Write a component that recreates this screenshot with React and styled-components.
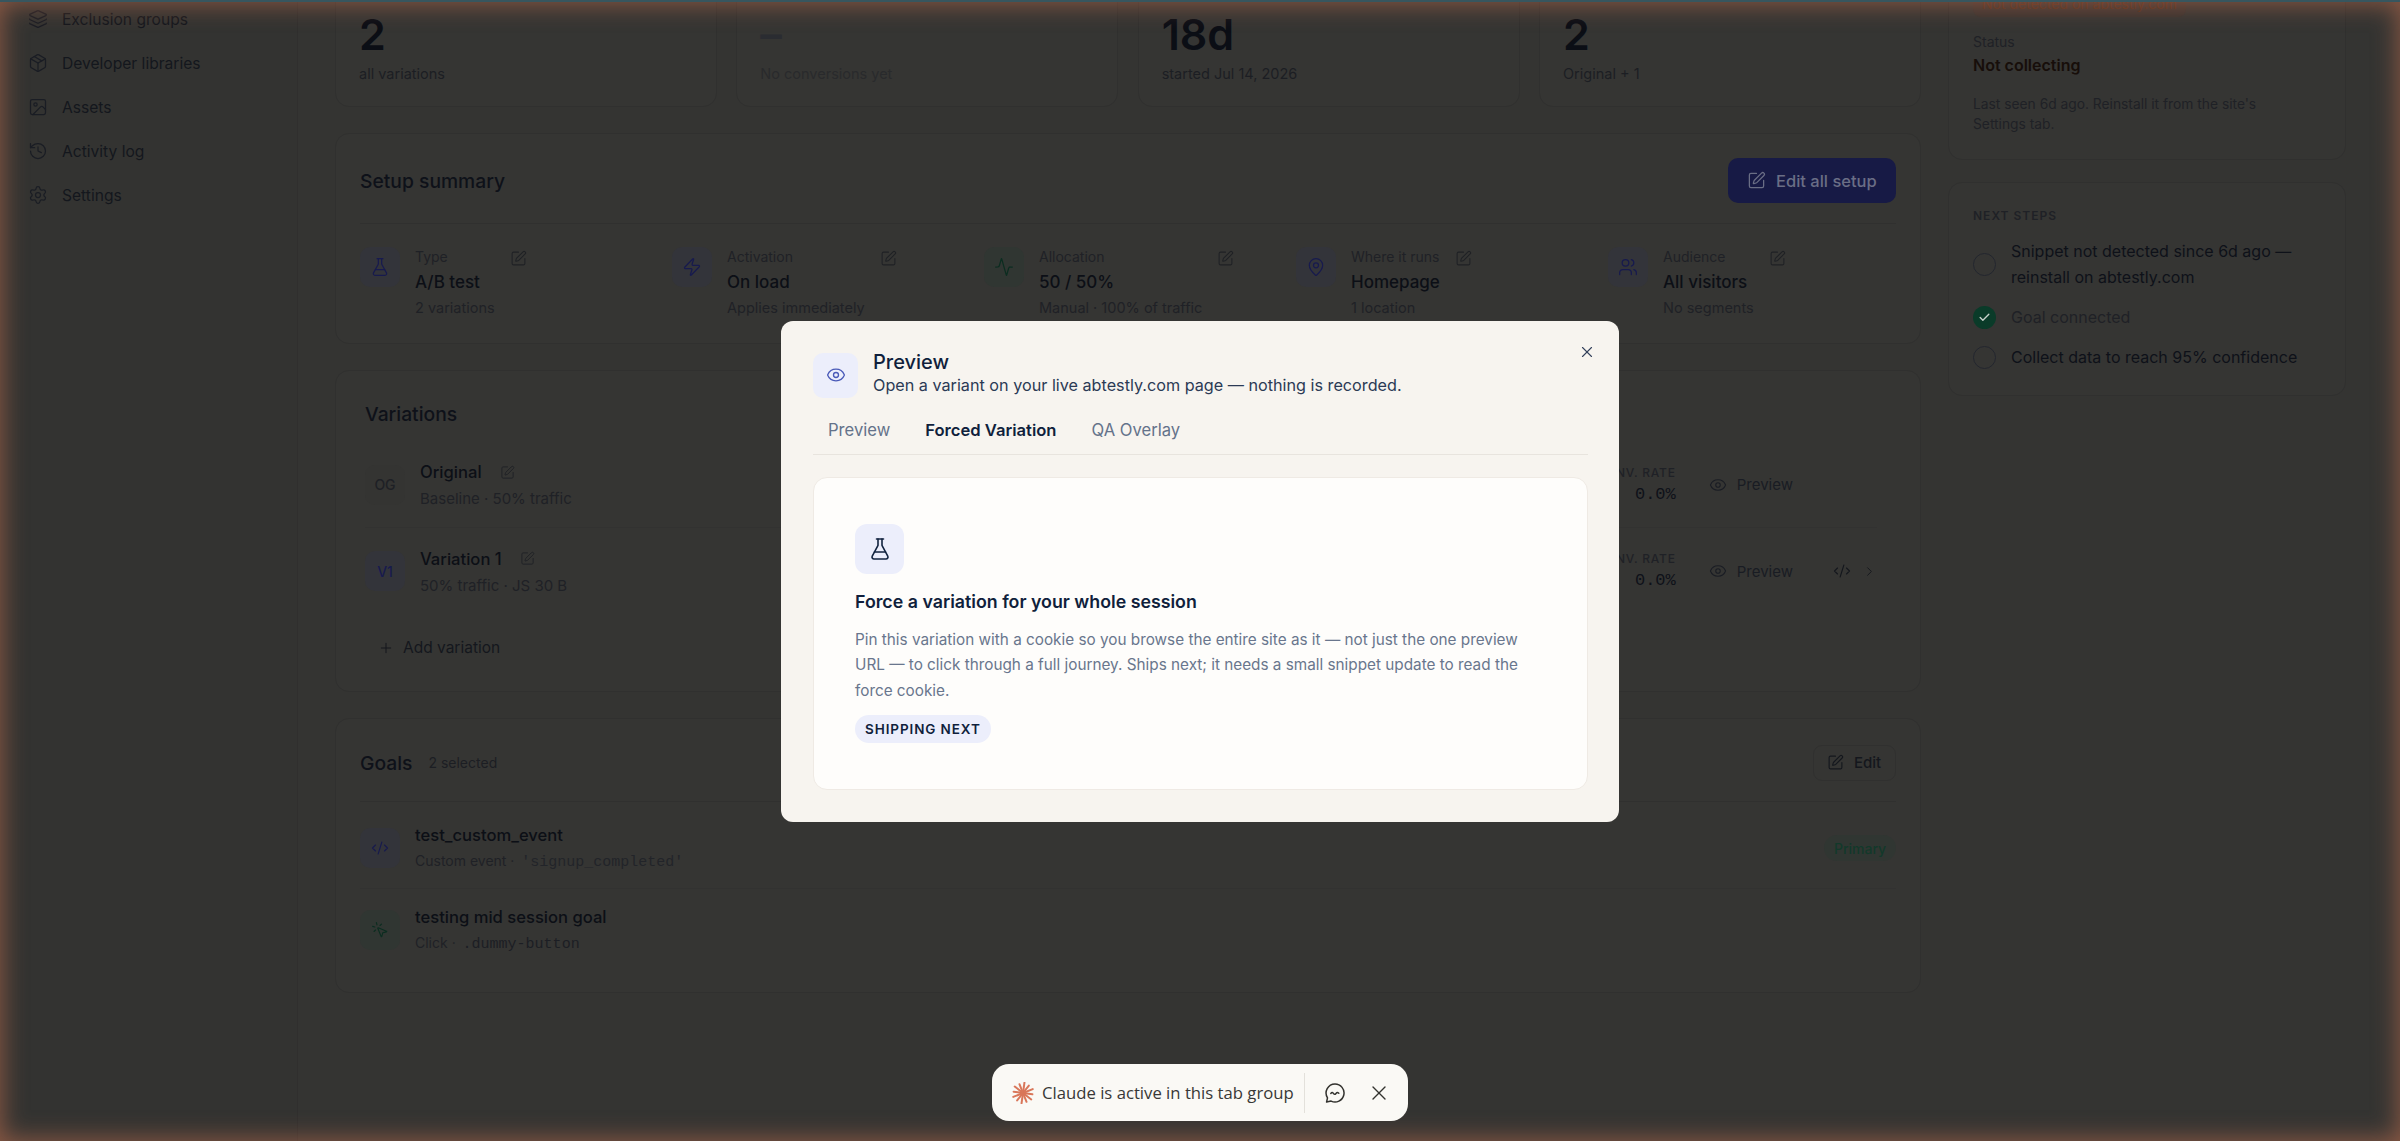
import React from "react";
import styled, { createGlobalStyle } from "styled-components";
import {
  Activity,
  Check,
  ChevronRight,
  CodeXml,
  Eye,
  FlaskConical,
  History,
  Image,
  Layers,
  MapPin,
  MousePointerClick,
  Package,
  Plus,
  Settings,
  SquarePen,
  Users,
  X,
  Zap,
} from "lucide-react";

const GlobalStyle = createGlobalStyle`
  html, body { margin: 0; height: 100%; overflow: hidden; background: #343432; }
  body { font-family: Inter, Roboto, "Liberation Sans", sans-serif; color: #0e1119; }
  * { box-sizing: border-box; }
`;

const MONO = `"Liberation Mono", "DejaVu Sans Mono", monospace`;

const Shell = styled.div`
  position: relative;
  display: flex;
  width: 2400px;
  height: 1141px;
  overflow: hidden;
  background: #343432;
`;

const Sidebar = styled.nav`
  flex: 0 0 298px;
  height: 100%;
  padding: 0 0 0 28px;
  margin-right: 37px;
  border-right: 1px solid #302f2e;
  background: #333331;
`;
const NavList = styled.div`
  display: flex;
  flex-direction: column;
  gap: 14px;
  margin-top: 4px;
`;
const NavItem = styled.div`
  display: flex;
  align-items: center;
  gap: 14px;
  height: 30px;
  font-size: 15.6px;
  color: #14171d;
  svg { color: #1a1d24; flex: none; }
`;

const Main = styled.main`
  flex: 0 0 1586px;
  min-width: 0;
  display: flex;
  flex-direction: column;
  gap: 26px;
  margin-right: 27px;
  margin-top: -40px;
`;
const Card = styled.section`
  background: #353533;
  border: 1px solid #30302f;
  border-radius: 14px;
`;
const StatGrid = styled.div`
  display: grid;
  grid-template-columns: repeat(4, 382px);
  justify-content: space-between;
`;
const StatCard = styled(Card)`
  height: 147px;
  padding: 48px 0 0 23px;
`;
const StatValue = styled.div`
  height: 50px;
  font-size: 43px;
  line-height: 50px;
  font-weight: 600;
  color: ${(p) => (p.$muted ? "#2a2c31" : "#0b0e15")};
`;
const StatLabel = styled.div`
  margin-top: 5px;
  font-size: 14.5px;
  line-height: 20px;
  color: ${(p) => (p.$muted ? "#292a2c" : "#1c1e23")};
`;

const SetupCard = styled(Card)`
  height: 211px;
  padding: 0 24px;
`;
const SetupHeader = styled.div`
  display: flex;
  align-items: center;
  justify-content: space-between;
  height: 90px;
  padding: 24px 0 20px;
  border-bottom: 1px solid #30302f;
`;
const CardTitle = styled.h2`
  margin: 0;
  font-size: 19.3px;
  line-height: 24px;
  font-weight: 500;
  color: #0e1119;
`;
const PrimaryButton = styled.div`
  display: flex;
  align-items: center;
  gap: 10px;
  width: 168px;
  height: 45px;
  padding-left: 19px;
  border-radius: 10px;
  background: #171a45;
  font-size: 16.5px;
  font-weight: 500;
  color: #6a6e85;
`;
const SetupRow = styled.div`
  display: grid;
  grid-template-columns: repeat(4, 312px) 1fr;
  padding-top: 23px;
`;
const SetupItem = styled.div`
  display: flex;
  align-items: flex-start;
`;
const IconBox = styled.div`
  flex: none;
  display: flex;
  align-items: center;
  justify-content: center;
  width: 40px;
  height: 40px;
  border-radius: 10px;
  background: ${(p) => (p.$tone === "green" ? "#303632" : p.$tone === "plain" ? "#343432" : "#33343a")};
  color: ${(p) => (p.$tone === "green" ? "#0b2d20" : p.$tone === "plain" ? "#1e2025" : "#171a4e")};
  font-size: 14px;
  font-weight: 500;
`;
const SetupText = styled.div`
  margin-left: 15px;
`;
const SetupLabel = styled.div`
  font-size: 14px;
  line-height: 20px;
  color: #1f2126;
`;
const SetupValue = styled.div`
  margin-top: 3px;
  font-size: 17px;
  line-height: 24px;
  font-weight: 500;
  color: #0c0f16;
`;
const SetupSub = styled.div`
  margin-top: 4px;
  font-size: 14.5px;
  line-height: 20px;
  color: #1f2126;
`;
const EditGlyph = styled(SquarePen)`
  flex: none;
  color: #1f2125;
  margin: ${(p) => p.$margin || "3px 0 0 15px"};
`;

const VariationsCard = styled(Card)`
  height: 322px;
  padding: 31px 43px 0 29px;
`;
const VariationRow = styled.div`
  display: flex;
  align-items: center;
  height: 86px;
  border-bottom: ${(p) => (p.$last ? "none" : "1px solid #323231")};
  margin-top: ${(p) => (p.$first ? "16px" : "0")};
`;
const RowText = styled.div`
  flex: 1;
  margin-left: 15px;
`;
const RowName = styled.div`
  display: flex;
  align-items: center;
  font-size: 16.6px;
  line-height: 24px;
  font-weight: 500;
  color: #0c0f16;
`;
const RowSub = styled.div`
  margin-top: 5px;
  font-size: 15px;
  line-height: 20px;
  color: #1f2126;
`;
const ConvRate = styled.div`
  text-align: right;
`;
const ConvLabel = styled.div`
  font-size: 12px;
  line-height: 16px;
  font-weight: 500;
  letter-spacing: 0.8px;
  color: #1f2126;
`;
const ConvValue = styled.div`
  margin-top: 4px;
  font-family: ${MONO};
  font-size: 17px;
  line-height: 20px;
  color: #0e1119;
`;
const PreviewLink = styled.div`
  display: flex;
  align-items: center;
  gap: 10px;
  margin-left: 33px;
  font-size: 15px;
  color: #191c23;
  svg { color: #1a1d24; }
`;
const RowActions = styled.div`
  display: flex;
  align-items: center;
  justify-content: space-between;
  width: 44px;
  margin-left: 40px;
  color: #14171d;
`;
const AddVariation = styled.div`
  display: flex;
  align-items: center;
  gap: 9px;
  margin: 24px 0 0 13px;
  font-size: 15.5px;
  color: #14171d;
`;

const GoalsCard = styled(Card)`
  height: 275px;
  padding: 0 24px;
`;
const GoalsHeader = styled.div`
  display: flex;
  align-items: center;
  height: 83px;
  padding: 25px 0 20px;
  border-bottom: 1px solid #30302f;
`;
const GoalsCount = styled.span`
  margin-left: 16px;
  font-size: 14px;
  color: #1c1e23;
`;
const OutlineButton = styled.div`
  display: flex;
  align-items: center;
  gap: 10px;
  width: 83px;
  height: 36px;
  margin-left: auto;
  padding-left: 13px;
  border: 1px solid #30302f;
  border-radius: 9px;
  font-size: 15px;
  font-weight: 500;
  color: #14171d;
`;
const GoalList = styled.div`
  margin-top: 6px;
`;
const GoalRow = styled.div`
  display: flex;
  align-items: center;
  height: 81px;
  border-bottom: ${(p) => (p.$last ? "none" : "1px solid #323231")};
`;
const GoalText = styled.div`
  flex: 1;
  margin-left: 15px;
`;
const GoalSub = styled.div`
  margin-top: 4px;
  font-size: 14px;
  line-height: 20px;
  color: #1f2126;
`;
const CodeText = styled.span`
  margin-left: 3px;
  font-family: ${MONO};
  font-size: 15px;
  color: ${(p) => p.$dim || "#222429"};
`;
const PrimaryPill = styled.span`
  display: flex;
  align-items: center;
  justify-content: center;
  width: 72px;
  height: 26px;
  border-radius: 13px;
  background: #303632;
  font-size: 14px;
  font-weight: 500;
  color: #12392a;
`;

const Aside = styled.aside`
  flex: 0 0 398px;
  display: flex;
  flex-direction: column;
  gap: 22px;
  margin-top: -41px;
`;
const SideCard = styled(Card)`
  padding: ${(p) => p.$padding};
`;
const AlertPill = styled.div`
  display: inline-block;
  height: 26px;
  padding: 0 9px;
  border-radius: 8px;
  background: #3a3330;
  font-size: 14px;
  line-height: 26px;
  color: #52301f;
`;
const StatusLabel = styled.div`
  margin-top: 16px;
  font-size: 14px;
  line-height: 18px;
  color: #1f2126;
`;
const StatusValue = styled.div`
  margin-top: 2px;
  font-size: 16px;
  line-height: 24px;
  font-weight: 600;
  color: #170e0a;
`;
const StatusNote = styled.div`
  margin-top: 17px;
  font-size: 13.8px;
  line-height: 20px;
  color: #1f2126;
`;
const StepsTitle = styled.div`
  font-size: 12px;
  line-height: 16px;
  font-weight: 600;
  letter-spacing: 1px;
  color: #1f2126;
`;
const StepList = styled.div`
  display: flex;
  flex-direction: column;
  gap: 14px;
  margin-top: 14px;
`;
const Step = styled.div`
  display: flex;
  align-items: center;
  gap: 15px;
  font-size: 16px;
  line-height: 26px;
  color: ${(p) => (p.$done ? "#1f2126" : "#0e1119")};
`;
const StepDot = styled.span`
  flex: none;
  display: flex;
  align-items: center;
  justify-content: center;
  width: 23px;
  height: 23px;
  border-radius: 50%;
  border: ${(p) => (p.$done ? "none" : "1.5px solid #23262e")};
  background: ${(p) => (p.$done ? "#0a3b29" : "transparent")};
  color: #c8d2cc;
`;

const ModalLayer = styled.div`
  position: absolute;
  inset: 1px 0 0 0;
  display: flex;
  align-items: center;
  justify-content: center;
`;
const Modal = styled.div`
  width: 838px;
  height: 501px;
  padding: 32px 31px 32px 32px;
  border-radius: 12px;
  background: #f7f4ef;
  position: relative;
`;
const CloseButton = styled.div`
  position: absolute;
  top: 22px;
  right: 23px;
  color: #33405a;
  line-height: 0;
`;
const ModalHeader = styled.div`
  display: flex;
  align-items: center;
  gap: 15px;
  height: 45px;
`;
const ModalHeaderText = styled.div`
  margin-top: -3px;
`;
const ModalIcon = styled.div`
  display: flex;
  align-items: center;
  justify-content: center;
  width: 45px;
  height: 45px;
  border-radius: 10px;
  background: #eceefb;
  color: #4a5ab8;
`;
const ModalTitle = styled.div`
  font-size: 20px;
  line-height: 24px;
  font-weight: 500;
  color: #101f3c;
`;
const ModalSub = styled.div`
  font-size: 16.2px;
  line-height: 23px;
  color: #2b3a55;
`;
const Tabs = styled.div`
  display: flex;
  height: 45px;
  margin-top: 12px;
  padding: 0 0 3px 15px;
  gap: 35px;
  align-items: center;
  border-bottom: 1px solid #e8e4de;
`;
const Tab = styled.div`
  font-size: 16.6px;
  font-weight: ${(p) => (p.$active ? 600 : 400)};
  color: ${(p) => (p.$active ? "#101f3c" : "#64728a")};
`;
const ModalCard = styled.div`
  height: 313px;
  margin-top: 22px;
  padding: 46px 40px 0 41px;
  border: 1px solid #efeae4;
  border-radius: 14px;
  background: #fefdfb;
`;
const FlaskBox = styled.div`
  display: flex;
  align-items: center;
  justify-content: center;
  width: 49px;
  height: 50px;
  border-radius: 12px;
  background: #eceefb;
  color: #12233f;
`;
const ModalHeading = styled.h3`
  margin: 16px 0 0;
  font-size: 17.8px;
  line-height: 24px;
  font-weight: 600;
  color: #101f3c;
`;
const ModalText = styled.p`
  margin: 13px 0 0;
  font-size: 15.3px;
  line-height: 25.5px;
  color: #69768d;
`;
const ShipPill = styled.span`
  display: inline-flex;
  align-items: center;
  height: 28px;
  margin-top: 12px;
  padding: 0 10px;
  border-radius: 14px;
  background: #eceefb;
  font-size: 13.5px;
  font-weight: 600;
  letter-spacing: 0.9px;
  color: #101f3c;
`;

const ClaudeBar = styled.div`
  position: absolute;
  left: 992px;
  bottom: 20px;
  display: flex;
  align-items: center;
  width: 416px;
  height: 57px;
  padding-left: 20px;
  border-radius: 17px;
  background: #faf9f5;
  font-family: "Open Sans", "Noto Sans", sans-serif;
  font-size: 16.7px;
  color: #383836;
`;
const BarText = styled.span`
  margin-left: 8px;
  white-space: nowrap;
`;
const BarDivider = styled.span`
  width: 1px;
  height: 40px;
  margin-left: 10px;
  background: #e3e1db;
`;
const BarIcons = styled.div`
  display: flex;
  align-items: center;
  gap: 21px;
  margin-left: 19px;
  color: #33332f;
`;

const EdgeGlow = styled.div`
  position: absolute;
  inset: 0;
  pointer-events: none;
  border-top: 2px solid #37565f;
  box-shadow: inset 0 0 24px 2px rgba(214, 120, 84, 0.55);
`;

const NAV_ITEMS = [
  [Layers, "Exclusion groups"],
  [Package, "Developer libraries"],
  [Image, "Assets"],
  [History, "Activity log"],
  [Settings, "Settings"],
];

const STATS = [
  { value: "2", label: "all variations" },
  { value: "–", label: "No conversions yet", muted: true },
  { value: "18d", label: "started Jul 14, 2026" },
  { value: "2", label: "Original + 1" },
];

const SETUP = [
  { Icon: FlaskConical, label: "Type", value: "A/B test", sub: "2 variations" },
  { Icon: Zap, label: "Activation", value: "On load", sub: "Applies immediately" },
  { Icon: Activity, label: "Allocation", value: "50 / 50%", sub: "Manual · 100% of traffic", tone: "green" },
  { Icon: MapPin, label: "Where it runs", value: "Homepage", sub: "1 location" },
  { Icon: Users, label: "Audience", value: "All visitors", sub: "No segments" },
];

function ClaudeMark() {
  const rays = [0, 30, 60, 90, 120, 150, 180, 210, 240, 270, 300, 330];
  return (
    <svg width="22" height="22" viewBox="0 0 22 22" stroke="#d9775a" strokeWidth="2" strokeLinecap="round">
      {rays.map((a, i) => (
        <line key={a} x1="11" y1="11" x2="11" y2={i % 2 ? 1.5 : 0.5} transform={`rotate(${a + 8} 11 11)`} />
      ))}
    </svg>
  );
}

function ChatMark() {
  return (
    <svg width="22" height="22" viewBox="0 0 22 22" fill="none" stroke="currentColor" strokeWidth="1.5" strokeLinecap="round" strokeLinejoin="round">
      <path d="M11 2a9 9 0 1 1-3.9 17.1L2.6 20l.9-4.2A9 9 0 0 1 11 2z" />
      <path d="M6.8 11.4c1-1.2 1.7-1.2 2.6 0s1.6 1.2 2.6 0 1.7-1.2 2.8-.2" />
    </svg>
  );
}

export default function App() {
  return (
    <>
      <GlobalStyle />
      <Shell>
        <Sidebar>
          <NavList>
            {NAV_ITEMS.map(([Icon, label]) => (
              <NavItem key={label}>
                <Icon size={20} strokeWidth={1.5} />
                {label}
              </NavItem>
            ))}
          </NavList>
        </Sidebar>

        <Main>
          <StatGrid>
            {STATS.map((s) => (
              <StatCard key={s.label}>
                <StatValue $muted={s.muted}>{s.value}</StatValue>
                <StatLabel $muted={s.muted}>{s.label}</StatLabel>
              </StatCard>
            ))}
          </StatGrid>

          <SetupCard>
            <SetupHeader>
              <CardTitle>Setup summary</CardTitle>
              <PrimaryButton>
                <SquarePen size={19} strokeWidth={1.6} />
                Edit all setup
              </PrimaryButton>
            </SetupHeader>
            <SetupRow>
              {SETUP.map(({ Icon, label, value, sub, tone }) => (
                <SetupItem key={label}>
                  <IconBox $tone={tone}>
                    <Icon size={20} strokeWidth={1.5} />
                  </IconBox>
                  <SetupText>
                    <SetupLabel>{label}</SetupLabel>
                    <SetupValue>{value}</SetupValue>
                    <SetupSub>{sub}</SetupSub>
                  </SetupText>
                  <EditGlyph size={17} strokeWidth={1.5} />
                </SetupItem>
              ))}
            </SetupRow>
          </SetupCard>

          <VariationsCard>
            <CardTitle>Variations</CardTitle>
            <VariationRow $first>
              <IconBox $tone="plain">OG</IconBox>
              <RowText>
                <RowName>
                  Original
                  <EditGlyph size={15} strokeWidth={1.5} $margin="0 0 0 18px" />
                </RowName>
                <RowSub>Baseline · 50% traffic</RowSub>
              </RowText>
              <ConvRate>
                <ConvLabel>CONV. RATE</ConvLabel>
                <ConvValue>0.0%</ConvValue>
              </ConvRate>
              <PreviewLink>
                <Eye size={18} strokeWidth={1.5} />
                Preview
              </PreviewLink>
              <RowActions />
            </VariationRow>
            <VariationRow $last>
              <IconBox>V1</IconBox>
              <RowText>
                <RowName>
                  Variation 1
                  <EditGlyph size={15} strokeWidth={1.5} $margin="0 0 0 18px" />
                </RowName>
                <RowSub>50% traffic · JS 30 B</RowSub>
              </RowText>
              <ConvRate>
                <ConvLabel>CONV. RATE</ConvLabel>
                <ConvValue>0.0%</ConvValue>
              </ConvRate>
              <PreviewLink>
                <Eye size={18} strokeWidth={1.5} />
                Preview
              </PreviewLink>
              <RowActions>
                <CodeXml size={18} strokeWidth={1.5} />
                <ChevronRight size={15} strokeWidth={1.5} />
              </RowActions>
            </VariationRow>
            <AddVariation>
              <Plus size={16} strokeWidth={1.5} />
              Add variation
            </AddVariation>
          </VariationsCard>

          <GoalsCard>
            <GoalsHeader>
              <CardTitle>Goals</CardTitle>
              <GoalsCount>2 selected</GoalsCount>
              <OutlineButton>
                <SquarePen size={17} strokeWidth={1.6} />
                Edit
              </OutlineButton>
            </GoalsHeader>
            <GoalList>
              <GoalRow>
                <IconBox>
                  <CodeXml size={18} strokeWidth={1.5} />
                </IconBox>
                <GoalText>
                  <RowName>test_custom_event</RowName>
                  <GoalSub>
                    Custom event · <CodeText>'signup_completed'</CodeText>
                  </GoalSub>
                </GoalText>
                <PrimaryPill>Primary</PrimaryPill>
              </GoalRow>
              <GoalRow $last>
                <IconBox $tone="green">
                  <MousePointerClick size={18} strokeWidth={1.5} />
                </IconBox>
                <GoalText>
                  <RowName>testing mid session goal</RowName>
                  <GoalSub>
                    Click · <CodeText $dim="#1c1e24">.dummy-button</CodeText>
                  </GoalSub>
                </GoalText>
              </GoalRow>
            </GoalList>
          </GoalsCard>
        </Main>

        <Aside>
          <SideCard $padding="31px 24px 25px">
            <AlertPill>Not detected on abtestly.com</AlertPill>
            <StatusLabel>Status</StatusLabel>
            <StatusValue>Not collecting</StatusValue>
            <StatusNote>
              Last seen 6d ago. Reinstall it from the site's
              <br />
              Settings tab.
            </StatusNote>
          </SideCard>
          <SideCard $padding="25px 24px 25px">
            <StepsTitle>NEXT STEPS</StepsTitle>
            <StepList>
              <Step>
                <StepDot />
                <span>
                  Snippet not detected since 6d ago —
                  <br />
                  reinstall on abtestly.com
                </span>
              </Step>
              <Step $done>
                <StepDot $done>
                  <Check size={13} strokeWidth={2.5} />
                </StepDot>
                Goal connected
              </Step>
              <Step>
                <StepDot />
                Collect data to reach 95% confidence
              </Step>
            </StepList>
          </SideCard>
        </Aside>

        <ModalLayer>
          <Modal>
            <CloseButton>
              <X size={18} strokeWidth={1.5} />
            </CloseButton>
            <ModalHeader>
              <ModalIcon>
                <Eye size={20} strokeWidth={1.6} />
              </ModalIcon>
              <ModalHeaderText>
                <ModalTitle>Preview</ModalTitle>
                <ModalSub>Open a variant on your live abtestly.com page — nothing is recorded.</ModalSub>
              </ModalHeaderText>
            </ModalHeader>
            <Tabs>
              <Tab>Preview</Tab>
              <Tab $active>Forced Variation</Tab>
              <Tab>QA Overlay</Tab>
            </Tabs>
            <ModalCard>
              <FlaskBox>
                <FlaskConical size={24} strokeWidth={1.6} />
              </FlaskBox>
              <ModalHeading>Force a variation for your whole session</ModalHeading>
              <ModalText>
                Pin this variation with a cookie so you browse the entire site as it — not just the one preview
                URL — to click through a full journey. Ships next; it needs a small snippet update to read the
                force cookie.
              </ModalText>
              <ShipPill>SHIPPING NEXT</ShipPill>
            </ModalCard>
          </Modal>
        </ModalLayer>

        <EdgeGlow />

        <ClaudeBar>
          <ClaudeMark />
          <BarText>Claude is active in this tab group</BarText>
          <BarDivider />
          <BarIcons>
            <ChatMark />
            <X size={24} strokeWidth={1.4} />
          </BarIcons>
        </ClaudeBar>
      </Shell>
    </>
  );
}
